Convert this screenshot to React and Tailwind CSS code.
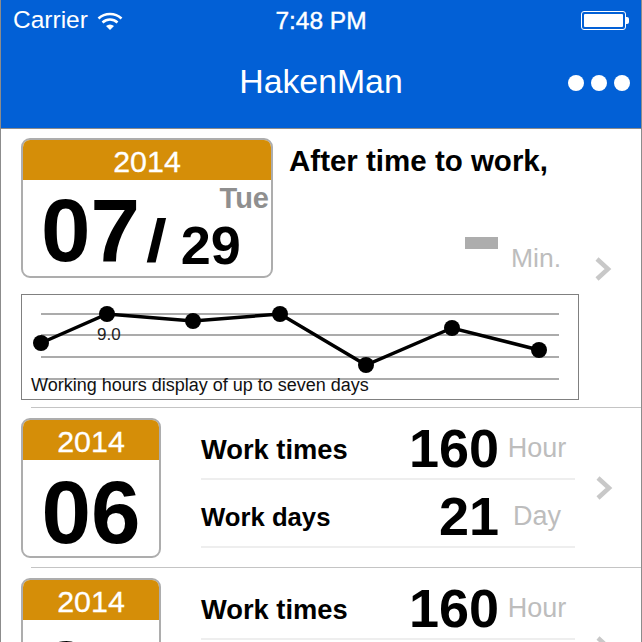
const font = { fontFamily: '"Liberation Sans", Arial, sans-serif' };

const points = [
  [20, 49],
  [86, 20],
  [172, 27],
  [259, 20],
  [345, 71],
  [431, 34],
  [518, 56],
];

const Chevron = ({ className }) => (
  <svg width="18" height="26" viewBox="0 0 18 26" className={className}>
    <polyline points="3,3 14,13 3,23" fill="none" stroke="#c8c8c8" strokeWidth="4.5" />
  </svg>
);

const Wifi = () => (
  <svg width="26" height="20" viewBox="0 0 26 20">
    <path d="M1.5 7.5C8 1.5 18 1.5 24.5 7.5" fill="none" stroke="#fff" strokeWidth="2.6" />
    <path d="M5.5 11.5C10 7.5 16 7.5 20.5 11.5" fill="none" stroke="#fff" strokeWidth="2.6" />
    <path d="M9 15C11.5 13 14.5 13 17 15L13 19Z" fill="#fff" />
  </svg>
);

const Battery = () => (
  <div className="flex items-center">
    <div className="w-[45px] h-[19px] rounded-[3px] border border-white p-[2px]">
      <div className="w-full h-full bg-white rounded-[1px]" />
    </div>
    <div className="w-[3px] h-[7px] bg-white rounded-r-[2px]" />
  </div>
);

const StatusBar = () => (
  <div className="relative h-[40px] flex items-center justify-between pl-[12px] pr-[12px] text-white">
    <div className="flex items-center gap-[9px] text-[24.5px] pt-[1px]">
      <span>Carrier</span>
      <Wifi />
    </div>
    <div className="absolute left-0 right-0 top-[6px] text-center text-[24.5px] leading-[30px] [-webkit-text-stroke:0.4px_#fff]">
      7:48 PM
    </div>
    <Battery />
  </div>
);

const NavBar = () => (
  <div className="relative h-[88px] flex items-center justify-center pb-[4px] text-white">
    <span className="text-[33.8px] leading-none">HakenMan</span>
    <div className="absolute right-[11px] top-[35px] flex gap-[7px]">
      <div className="w-[16px] h-[16px] rounded-full bg-white" />
      <div className="w-[16px] h-[16px] rounded-full bg-white" />
      <div className="w-[16px] h-[16px] rounded-full bg-white" />
    </div>
  </div>
);

const YearCap = () => (
  <div className="h-[40px] bg-[#d58e08] text-white text-[30.4px] leading-[42px] text-center [-webkit-text-stroke:0.3px_#fff]">
    2014
  </div>
);

const TodayCard = () => (
  <div className="w-[252px] h-[140px] shrink-0 rounded-[9px] border-2 border-[#adadad] overflow-hidden bg-white">
    <YearCap />
    <div className="relative h-[96px] text-black">
      <span className="absolute right-[2px] top-[4px] text-[29px] leading-none font-bold text-[#8f8f8f]">Tue</span>
      <div className="flex items-baseline pl-[18px] pt-[6px]">
        <span className="text-[89px] leading-[88px] font-bold">07</span>
        <span className="text-[60px] leading-[60px] font-bold ml-[8px] scale-x-125">/</span>
        <span className="text-[54px] leading-[54px] font-bold ml-[16px] relative top-[3px]">29</span>
      </div>
    </div>
  </div>
);

const Chart = () => (
  <div className="relative w-[558px] h-[106px] border border-[#808080]">
    <svg width="556" height="104" className="block">
      {[19, 40, 62, 84].map((y) => (
        <line key={y} x1="19" x2="537" y1={y} y2={y} stroke="#ababab" strokeWidth="2" />
      ))}
      <polyline
        points={points.map((p) => p.join(",")).join(" ")}
        fill="none"
        stroke="#000"
        strokeWidth="3.5"
        transform="translate(-1 -1)"
      />
      {points.map(([x, y]) => (
        <circle key={x} cx={x - 1} cy={y - 1} r="8" fill="#000" />
      ))}
    </svg>
    <span className="absolute left-[75px] top-[31px] text-[17px] leading-none text-[#222]">9.0</span>
    <span className="absolute left-[9px] top-[81px] text-[18px] leading-none whitespace-nowrap text-[#111]">
      Working hours display of up to seven days
    </span>
  </div>
);

const TodaySection = () => (
  <section className="h-[278px] pt-[9px] pl-[20px]">
    <div className="relative flex">
      <TodayCard />
      <div className="relative flex-1 h-[140px]">
        <div className="pl-[16px] pt-[7px] text-[29.5px] leading-[32px] font-bold text-black whitespace-nowrap">
          After time to work,
        </div>
        <div className="absolute left-[192px] top-[99px] w-[33px] h-[12px] bg-[#adadad]" />
        <span className="absolute left-[238px] top-[107px] text-[26.5px] leading-none text-[#bdbdbd]">Min.</span>
        <Chevron className="absolute left-[321px] top-[118px]" />
      </div>
    </div>
    <div className="mt-[16px]">
      <Chart />
    </div>
  </section>
);

const StatRow = ({ label, value, unit, labelClass }) => (
  <div className="flex items-center h-[68px] border-b-2 border-[#eeeeee] text-black">
    <span className={`font-bold flex-1 ${labelClass}`}>{label}</span>
    <span className="text-[54px] font-bold leading-none pt-[6px]">{value}</span>
    <span className="w-[76px] text-center text-[27px] pt-[6px] text-[#bdbdbd]">{unit}</span>
  </div>
);

const MonthSection = ({ month }) => (
  <section className="relative h-[160px] border-t border-[#c4c4c4] ml-[30px]">
    <div className="flex -ml-[10px] pt-[10px]">
      <div className="w-[140px] h-[140px] shrink-0 rounded-[9px] border-2 border-[#adadad] overflow-hidden bg-white">
        <YearCap />
        <div className="text-[89px] leading-[88px] pt-[8px] font-bold text-center text-black">{month}</div>
      </div>
      <div className="w-[374px] ml-[40px] -mt-[6px] shrink-0">
        <StatRow label="Work times" value="160" unit="Hour" labelClass="text-[27.3px] pt-[10px]" />
        <StatRow label="Work days" value="21" unit="Day" labelClass="text-[25.7px] pt-[8px]" />
      </div>
    </div>
    <Chevron className="absolute left-[564px] top-[67px]" />
  </section>
);

export default function App() {
  return (
    <div className="w-[642px] h-[642px] overflow-hidden bg-white border-x border-[#8c8c8c]" style={font}>
      <header className="h-[128px] bg-[#0260d6]">
        <StatusBar />
        <NavBar />
      </header>
      <main className="h-[514px] border-t border-[#8c8c8c]">
        <TodaySection />
        <MonthSection month="06" />
        <MonthSection month="05" />
      </main>
    </div>
  );
}
